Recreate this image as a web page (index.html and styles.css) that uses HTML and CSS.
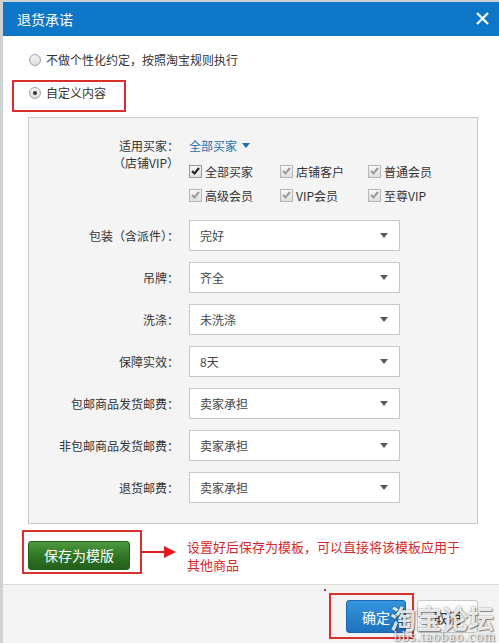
FILE: index.html
```html
<!DOCTYPE html>
<html lang="zh-CN">
<head>
<meta charset="utf-8">
<title>退货承诺</title>
<link rel="stylesheet" href="styles.css">
</head>
<body>
<div class="dialog">
  <div class="titlebar">
    <span class="title">退货承诺</span>
    <svg class="close" width="13" height="13" viewBox="0 0 13 13"><path d="M1 1 L12 12 M12 1 L1 12" stroke="#fff" stroke-width="2.2" fill="none"/></svg>
  </div>
  <div class="content">
    <div class="radio-row first">
      <span class="radio"></span><span>不做个性化约定，按照淘宝规则执行</span>
    </div>
    <div class="red-box custom">
      <div class="radio-row">
        <span class="radio checked"></span><span>自定义内容</span>
      </div>
    </div>
    <div class="panel">
      <div class="label buyer-label">适用买家：<br>（店铺VIP）</div>
      <div class="buyer">
        <div class="buyer-link">全部买家<span class="caret"></span></div>
        <div class="checks">
          <label class="check"><span class="box dark"><svg width="9" height="8" viewBox="0 0 9 8"><path d="M1 4 L3.5 6.5 L8 1" stroke="#222" stroke-width="2" fill="none"/></svg></span>全部买家</label>
          <label class="check"><span class="box"><svg width="9" height="8" viewBox="0 0 9 8"><path d="M1 4 L3.5 6.5 L8 1" stroke="#9a9a9a" stroke-width="2" fill="none"/></svg></span>店铺客户</label>
          <label class="check"><span class="box"><svg width="9" height="8" viewBox="0 0 9 8"><path d="M1 4 L3.5 6.5 L8 1" stroke="#9a9a9a" stroke-width="2" fill="none"/></svg></span>普通会员</label>
          <label class="check"><span class="box"><svg width="9" height="8" viewBox="0 0 9 8"><path d="M1 4 L3.5 6.5 L8 1" stroke="#9a9a9a" stroke-width="2" fill="none"/></svg></span>高级会员</label>
          <label class="check"><span class="box"><svg width="9" height="8" viewBox="0 0 9 8"><path d="M1 4 L3.5 6.5 L8 1" stroke="#9a9a9a" stroke-width="2" fill="none"/></svg></span>VIP会员</label>
          <label class="check"><span class="box"><svg width="9" height="8" viewBox="0 0 9 8"><path d="M1 4 L3.5 6.5 L8 1" stroke="#9a9a9a" stroke-width="2" fill="none"/></svg></span>至尊VIP</label>
        </div>
      </div>

      <div class="label">包装（含派件）：</div>
      <div class="select">完好<span class="arrow"></span></div>

      <div class="label">吊牌：</div>
      <div class="select">齐全<span class="arrow"></span></div>

      <div class="label">洗涤：</div>
      <div class="select">未洗涤<span class="arrow"></span></div>

      <div class="label">保障实效：</div>
      <div class="select">8天<span class="arrow"></span></div>

      <div class="label">包邮商品发货邮费：</div>
      <div class="select">卖家承担<span class="arrow"></span></div>

      <div class="label">非包邮商品发货邮费：</div>
      <div class="select">卖家承担<span class="arrow"></span></div>

      <div class="label">退货邮费：</div>
      <div class="select">卖家承担<span class="arrow"></span></div>
    </div>
    <div class="action-row">
      <div class="red-box save-box">
        <button class="btn-save">保存为模版</button>
      </div>
      <svg class="pointer" width="34" height="14" viewBox="0 0 34 14"><path d="M0 7 H24" stroke="#e01b1b" stroke-width="2"/><path d="M22 1 L34 7 L22 13 Z" fill="#e01b1b"/></svg>
      <div class="hint">设置好后保存为模板，可以直接将该模板应用于其他商品</div>
    </div>
  </div>
  <div class="footer">
    <span class="dot"></span>
    <div class="red-box ok-box">
      <button class="btn-ok">确定</button>
    </div>
    <button class="btn-cancel">取消</button>
  </div>
  <div class="watermark">
    <div class="wm-big">淘宝论坛</div>
    <div class="wm-small">bbs.taobao.com</div>
  </div>
</div>
</body>
</html>
```

FILE: styles.css
```css
* { box-sizing: border-box; }
html, body { margin: 0; padding: 0; }
body {
  background: #cdd2d6;
  padding: 2px 0 0 3px;
  font-family: "Noto Sans CJK SC", "Microsoft YaHei", sans-serif;
  font-size: 12px;
  color: #333;
  overflow: hidden;
}
.dialog {
  position: relative;
  width: 496px;
  height: 641px;
  background: #fff;
  display: flex;
  flex-direction: column;
  overflow: hidden;
}
.titlebar {
  height: 34px;
  flex: none;
  background: #0c77c6;
  display: flex;
  align-items: center;
  justify-content: space-between;
  padding: 0 10px 0 14px;
}
.title {
  color: #fff;
  font-size: 14px;
  line-height: 34px;
}
.close { display: block; margin-top: -2px; }
.content {
  flex: 1;
  display: flex;
  flex-direction: column;
  align-items: flex-start;
}
.radio-row {
  display: flex;
  align-items: center;
  height: 20px;
  line-height: 20px;
  gap: 5px;
}
.radio-row.first {
  margin: 14px 0 0 26px;
}
.radio {
  width: 12px;
  height: 12px;
  border-radius: 50%;
  border: 1px solid #a3a3a3;
  background: linear-gradient(#f4f4f4, #dcdcdc);
  position: relative;
  flex: none;
}
.radio.checked::after {
  content: "";
  position: absolute;
  left: 3px;
  top: 3px;
  width: 4px;
  height: 4px;
  border-radius: 50%;
  background: #333;
}
.red-box {
  border: 2px solid #d9302c;
}
.custom {
  margin: 10px 0 0 9px;
  width: 114px;
  height: 32px;
  padding: 1px 0 0 15px;
}
.panel {
  margin: 5px 0 0 25px;
  width: 450px;
  height: 407px;
  background: #f4f4f4;
  border: 1px solid #c9c9c9;
  padding: 19px 0 0 0;
  display: grid;
  grid-template-columns: 150px 211px;
  column-gap: 10px;
  row-gap: 11px;
  align-content: start;
}
.label {
  text-align: right;
  line-height: 31px;
  font-size: 12px;
  color: #333;
  white-space: nowrap;
}
.buyer-label {
  line-height: 17px;
  align-self: start;
}
.buyer { padding-bottom: 4px; }
.buyer-link {
  line-height: 17px;
  color: #1f6ea8;
  display: flex;
  align-items: center;
}
.caret {
  display: inline-block;
  margin-left: 5px;
  width: 0;
  height: 0;
  border-left: 4px solid transparent;
  border-right: 4px solid transparent;
  border-top: 5px solid #1f6ea8;
}
.checks {
  margin-top: 7px;
  display: grid;
  grid-template-columns: 91px 88px 80px;
  row-gap: 4px;
  width: 270px;
}
.check {
  display: flex;
  align-items: center;
  height: 20px;
  white-space: nowrap;
  color: #333;
}
.box {
  width: 13px;
  height: 13px;
  border: 1px solid #b5b5b5;
  background: linear-gradient(#f6f6f6, #e0e0e0);
  margin-right: 3px;
  display: flex;
  align-items: center;
  justify-content: center;
  flex: none;
}
.box.dark { border-color: #9a9a9a; }
.select {
  height: 31px;
  background: #fff;
  border: 1px solid #c8c8c8;
  padding-left: 10px;
  line-height: 29px;
  color: #444;
  position: relative;
  display: flex;
  align-items: center;
  justify-content: space-between;
  padding-right: 11px;
}
.arrow {
  width: 0;
  height: 0;
  border-left: 4px solid transparent;
  border-right: 4px solid transparent;
  border-top: 5px solid #5a5a5a;
}
.action-row {
  margin: 5px 0 0 19px;
  display: flex;
  align-items: center;
}
.save-box {
  width: 120px;
  height: 44px;
  padding: 9px 0 0 4px;
}
.btn-save {
  display: block;
  width: 102px;
  height: 29px;
  border: 1px solid #22601a;
  border-radius: 3px;
  background: linear-gradient(#4c9a3f, #2f7424 55%, #245f1b);
  color: #fff;
  font-family: inherit;
  font-size: 14px;
  padding: 0;
  line-height: 27px;
}
.pointer { display: block; flex: none; }
.hint {
  align-self: flex-start;
  margin: 9px 0 0 11px;
  width: 280px;
  font-size: 13px;
  line-height: 18px;
  color: #d3282a;
}
.footer {
  flex: none;
  height: 59px;
  background: #f3f3f3;
  border-top: 1px solid #dcdcdc;
  display: flex;
  justify-content: flex-end;
  align-items: flex-start;
  padding: 8px 21px 0 0;
  position: relative;
}
.dot {
  position: absolute;
  left: 321px;
  top: 4px;
  width: 2px;
  height: 2px;
  background: #d9302c;
}
.ok-box {
  padding: 5px 6px 4px 15px;
}
.btn-ok {
  display: block;
  width: 60px;
  height: 33px;
  border: 1px solid #1a69b0;
  border-radius: 3px;
  background: linear-gradient(#3595de, #1e72bd);
  color: #fff;
  font-family: inherit;
  font-size: 14px;
  padding: 0;
}
.btn-cancel {
  margin: 7px 0 0 3px;
  width: 61px;
  height: 33px;
  border: 1px solid #c8c8c8;
  border-radius: 3px;
  background: linear-gradient(#fdfdfd, #ececec);
  color: #333;
  font-family: inherit;
  font-size: 14px;
  padding: 0;
}
.watermark {
  position: absolute;
  left: 387px;
  top: 603px;
  pointer-events: none;
  color: rgba(255, 255, 255, 0.85);
  text-shadow: 0 0 2px rgba(0, 0, 0, 0.45), 1px 1px 1px rgba(60, 60, 60, 0.5);
}
.wm-big {
  font-size: 26px;
  font-weight: bold;
  line-height: 26px;
  white-space: nowrap;
}
.wm-small {
  font-family: "Liberation Serif", serif;
  font-size: 14px;
  line-height: 12px;
  letter-spacing: 1px;
  margin-left: 4px;
  white-space: nowrap;
}
```
